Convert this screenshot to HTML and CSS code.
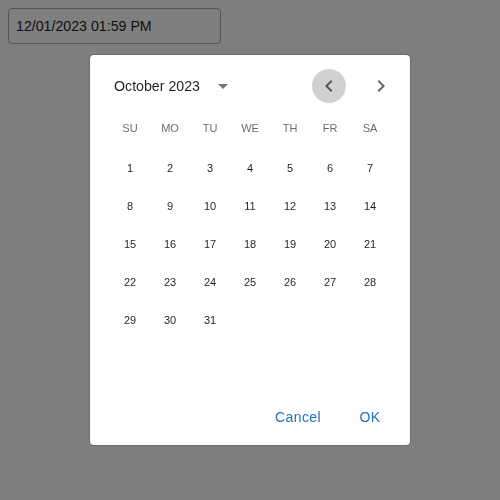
FILE: index.html
```html
<!DOCTYPE html>
<html>
<head>
<meta charset="utf-8">
<link rel="stylesheet" href="styles.css">
</head>
<body>
<div class="field">12/01/2023 01:59 PM</div>
<div class="backdrop"></div>
<div class="dialog">
  <div class="cal-header">
    <div class="label">October 2023</div>
    <svg class="drop" viewBox="0 0 24 24" width="24" height="24"><path d="M7 10l5 5 5-5z"/></svg>
    <div class="spacer"></div>
    <div class="nav">
      <button class="nav-btn active"><svg viewBox="0 0 24 24" width="24" height="24"><path d="M15.41 7.41 14 6l-6 6 6 6 1.41-1.41L10.83 12z"/></svg></button>
      <button class="nav-btn"><svg viewBox="0 0 24 24" width="24" height="24"><path d="M10 6 8.59 7.41 13.17 12l-4.58 4.59L10 18l6-6z"/></svg></button>
    </div>
  </div>
  <div class="weekdays">
    <span>SU</span><span>MO</span><span>TU</span><span>WE</span><span>TH</span><span>FR</span><span>SA</span>
  </div>
  <div class="days">
    <span>1</span><span>2</span><span>3</span><span>4</span><span>5</span><span>6</span><span>7</span>
    <span>8</span><span>9</span><span>10</span><span>11</span><span>12</span><span>13</span><span>14</span>
    <span>15</span><span>16</span><span>17</span><span>18</span><span>19</span><span>20</span><span>21</span>
    <span>22</span><span>23</span><span>24</span><span>25</span><span>26</span><span>27</span><span>28</span>
    <span>29</span><span>30</span><span>31</span>
  </div>
  <div class="actions">
    <button class="btn">Cancel</button>
    <button class="btn">OK</button>
  </div>
</div>
</body>
</html>
```
FILE: styles.css
```css
html, body {
  margin: 0;
  padding: 0;
  background: #fff;
  font-family: "Liberation Sans", Arial, sans-serif;
}
body {
  padding: 8px;
  width: 484px;
  height: 484px;
}
.field {
  box-sizing: border-box;
  width: 213px;
  height: 36px;
  border: 1px solid rgba(0,0,0,0.35);
  border-radius: 4px;
  padding: 0 7px;
  font-size: 14.2px;
  line-height: 34px;
  color: #1c1c1c;
}
.backdrop {
  position: fixed;
  inset: 0;
  background: rgba(0,0,0,0.5);
}
.dialog {
  position: fixed;
  left: 90px;
  top: 55px;
  width: 320px;
  height: 390px;
  background: #fff;
  border-radius: 4px;
  box-shadow: 0 0 1px 0.5px rgba(0,0,0,0.15);
  display: flex;
  flex-direction: column;
}
.cal-header {
  display: flex;
  align-items: center;
  margin-top: 14px;
  height: 34px;
  padding: 0 12px 0 24px;
}
.label {
  font-size: 14.2px;
  color: rgba(0,0,0,0.87);
}
.drop {
  margin-left: 11px;
  fill: rgba(0,0,0,0.54);
}
.spacer { flex: 1; }
.nav {
  display: flex;
  gap: 18px;
}
.nav-btn {
  width: 34px;
  height: 34px;
  border: none;
  padding: 0;
  border-radius: 50%;
  background: transparent;
  display: flex;
  align-items: center;
  justify-content: center;
  fill: rgba(0,0,0,0.6);
}
.nav-btn.active {
  background: rgba(0,0,0,0.18);
}
.weekdays, .days {
  display: grid;
  grid-template-columns: repeat(7, 40px);
  padding: 0 20px;
}
.weekdays {
  margin-top: 6px;
  height: 38px;
  align-items: center;
}
.weekdays span {
  text-align: center;
  font-size: 11px;
  color: rgba(0,0,0,0.6);
}
.days {
  margin-top: 2px;
  grid-auto-rows: 38px;
  align-items: center;
}
.days span {
  text-align: center;
  font-size: 11px;
  color: rgba(0,0,0,0.87);
}
.actions {
  margin-top: auto;
  display: flex;
  justify-content: flex-end;
  gap: 8px;
  padding: 0 8px 10px;
}
.btn {
  min-width: 64px;
  height: 36px;
  border: none;
  background: transparent;
  padding: 0 8px;
  font-family: "Liberation Sans", Arial, sans-serif;
  font-size: 14px;
  letter-spacing: 0.4px;
  color: #1f6fc4;
  border-radius: 4px;
}
```
